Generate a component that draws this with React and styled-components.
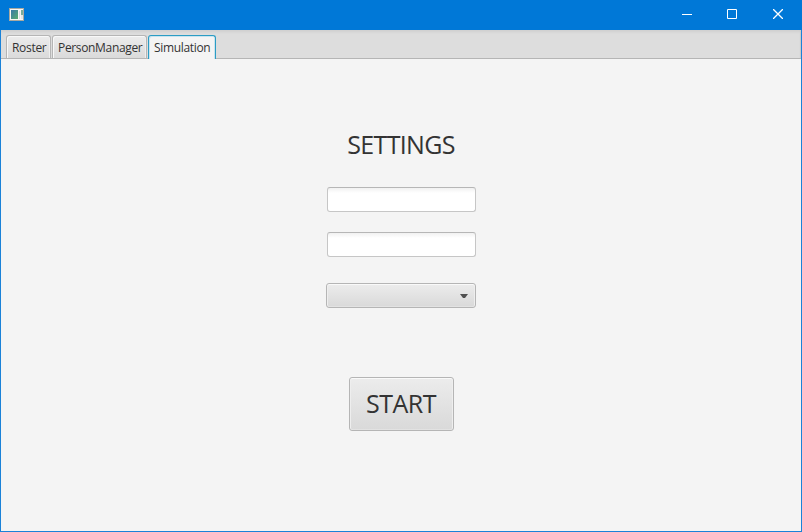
import React from "react";
import styled, { createGlobalStyle } from "styled-components";

const GlobalStyle = createGlobalStyle`
  * { box-sizing: border-box; }
  body { margin: 0; overflow: hidden; }
`;

const Window = styled.div`
  width: 802px;
  height: 532px;
  display: flex;
  flex-direction: column;
  background: #f4f4f4;
  border: solid #1a82d8;
  border-width: 0 1px 1px;
  color: #333;
  font: 12px/16px "Open Sans", "Noto Sans", sans-serif;
`;

const TitleBar = styled.header`
  height: 30px;
  flex: none;
  display: flex;
  align-items: center;
  justify-content: space-between;
  margin: 0 -1px;
  padding: 0 1px 0 9px;
  background: #0078d7;
`;

const AppIcon = styled.svg`
  width: 15px;
  height: 13px;
  margin-top: -2px;
`;

const Controls = styled.div`
  display: flex;
`;

const Control = styled.button`
  width: ${(p) => p.$width || 45}px;
  height: 30px;
  padding: 0;
  border: 0;
  background: none;
  color: #fff;
  display: flex;
  align-items: center;
  justify-content: center;
`;

const ControlGlyph = styled.svg`
  width: 10px;
  height: 10px;
  margin-top: -2px;
  fill: none;
  stroke: currentColor;
  stroke-width: ${(p) => p.$weight || 1};
`;

const TabStrip = styled.nav`
  height: 29px;
  flex: none;
  display: flex;
  align-items: flex-end;
  gap: 1px;
  padding-left: 5px;
  background: #ddd;
  border-bottom: 1px solid #b5b5b5;
  box-shadow: inset 0 4px 3px -2px #cfcfcf, inset -2px 0 1px -1px #c8c8c8;
`;

const Tab = styled.button`
  width: ${(p) => p.$width}px;
  height: ${(p) => (p.$active ? 24 : 23)}px;
  margin-bottom: ${(p) => (p.$active ? -1 : 0)}px;
  padding: ${(p) => (p.$active ? 0 : 1)}px 0 0 5px;
  border: 1px solid ${(p) => (p.$active ? "#2b9cc4" : "#b5b5b5")};
  border-bottom: 0;
  border-radius: 3px 3px 0 0;
  background: ${(p) => (p.$active ? "#f4f4f4" : "linear-gradient(#ececec, #dadada)")};
  box-shadow: ${(p) =>
    p.$active ? "inset 1px 1px 0 #c9e4ee, inset -1px 0 0 #c9e4ee" : "inset 1px 1px 0 #f8f8f8, inset -1px 0 0 #eee"};
  color: #333;
  font: inherit;
  letter-spacing: ${(p) => p.$tracking}px;
  white-space: nowrap;
  text-align: left;
`;

const Settings = styled.main`
  flex: 1;
  display: flex;
  flex-direction: column;
  align-items: center;
  padding-top: 68px;
`;

const Heading = styled.h1`
  margin: 0 0 26px;
  font-size: 25px;
  font-weight: 400;
  line-height: 34px;
  letter-spacing: -0.68px;
`;

const Field = styled.input`
  width: 149px;
  height: 25px;
  margin: 0 0 20px 1px;
  padding: 0 7px;
  border: 1px solid #c6c6c6;
  border-top-color: #b6b6b6;
  border-radius: 3px;
  outline: 0;
  background: linear-gradient(#f1f1f1, #fff 5px);
  font: inherit;
`;

const raised = `
  border: 1px solid #b5b5b5;
  border-radius: 3px;
  background: linear-gradient(#ececec, #d9d9d9);
  box-shadow: inset 0 1px 0 #f9f9f9, inset 1px 0 0 #eee, inset -1px 0 0 #eee, inset 0 -1px 0 #e2e2e2;
`;

const ComboBox = styled.button`
  ${raised}
  width: 150px;
  height: 25px;
  margin: 6px 0 69px;
  padding: 0 7px;
  display: flex;
  align-items: center;
  justify-content: flex-end;
`;

const Arrow = styled.svg`
  width: 8px;
  height: 4px;
  margin-top: 1px;
  fill: #505050;
`;

const StartButton = styled.button`
  ${raised}
  width: 105px;
  height: 54px;
  margin-left: 1px;
  padding: 0 1px 2px 0;
  color: #333;
  font: 25px/34px "Open Sans", "Noto Sans", sans-serif;
  letter-spacing: -0.5px;
`;

const tabs = [
  { label: "Roster", width: 45, tracking: -0.3 },
  { label: "PersonManager", width: 95, tracking: -0.34 },
  { label: "Simulation", width: 68, tracking: -0.33, active: true },
];

export default function App() {
  return (
    <Window>
      <GlobalStyle />
      <TitleBar>
        <AppIcon viewBox="0 0 15 13">
          <rect x="0.5" y="0.5" width="14" height="12" fill="#f7f7f5" stroke="#a9a9a0" />
          <defs>
            <linearGradient id="screen" x1="0" y1="0" x2="1" y2="1">
              <stop offset="0" stopColor="#3978a8" />
              <stop offset="1" stopColor="#58ad70" />
            </linearGradient>
          </defs>
          <rect x="2" y="2" width="7" height="9" fill="url(#screen)" />
          <rect x="10" y="3" width="1" height="8" fill="#dedee8" />
          <rect x="12" y="2" width="2" height="5" fill="#79ac9c" />
          <rect x="12" y="7" width="2" height="4" fill="#e5e7e5" />
        </AppIcon>
        <Controls>
          <Control aria-label="Minimize">
            <ControlGlyph viewBox="0 0 10 10"><path d="M0 5.5H10" /></ControlGlyph>
          </Control>
          <Control aria-label="Maximize">
            <ControlGlyph viewBox="0 0 10 10"><path d="M.5.5h9v9h-9z" /></ControlGlyph>
          </Control>
          <Control aria-label="Close" $width={47}>
            <ControlGlyph viewBox="0 0 10 10" $weight={1.3}><path d="M0 0L10 10M10 0L0 10" /></ControlGlyph>
          </Control>
        </Controls>
      </TitleBar>
      <TabStrip>
        {tabs.map((t) => (
          <Tab key={t.label} $width={t.width} $tracking={t.tracking} $active={t.active}>
            {t.label}
          </Tab>
        ))}
      </TabStrip>
      <Settings>
        <Heading>SETTINGS</Heading>
        <Field />
        <Field />
        <ComboBox aria-label="Option">
          <Arrow viewBox="0 0 8 4"><path d="M0 0h8L5 4H3z" /></Arrow>
        </ComboBox>
        <StartButton>START</StartButton>
      </Settings>
    </Window>
  );
}
